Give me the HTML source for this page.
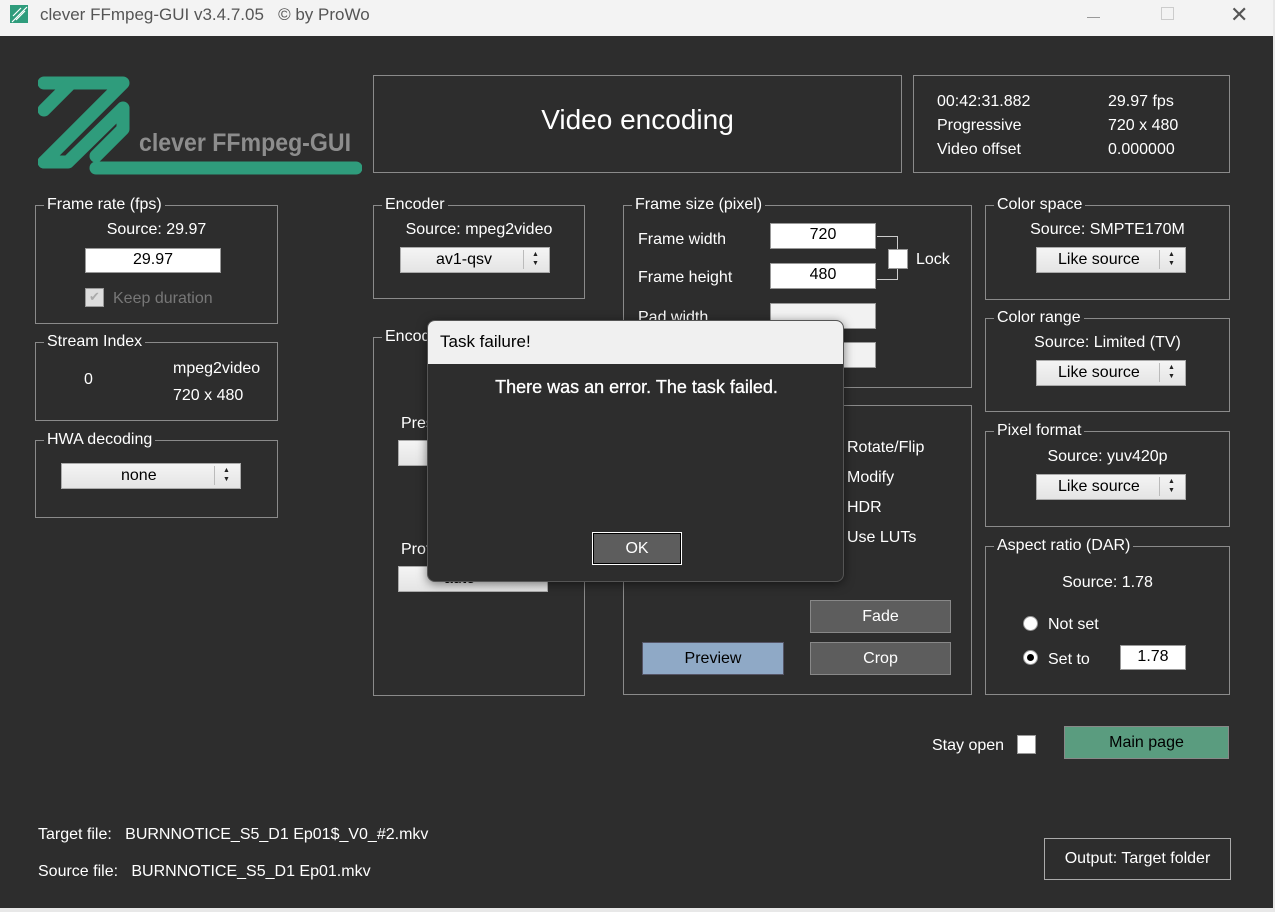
<!DOCTYPE html>
<html><head><meta charset="utf-8"><style>
*{box-sizing:border-box;margin:0;padding:0}
body{width:1275px;height:912px;background:#e8e8e8;font-family:"Liberation Sans",sans-serif;position:relative;overflow:hidden;color:#fff}
.a{position:absolute}
.win{left:0;top:0;width:1273px;height:908px;background:#2d2d2d}
.tb{left:0;top:0;width:1273px;height:36px;background:#f3f3f3;color:#555;font-size:17px}
.g{position:absolute;border:1px solid #8a8a8a}
.g>.l{position:absolute;top:-11px;left:8px;background:#2d2d2d;padding:0 3px;font-size:16px;line-height:20px;color:#fff}
.t{position:absolute;font-size:16px;white-space:nowrap;color:#fff}
.in{position:absolute;background:#fff;border:1px solid #999;color:#000;font-size:16px;text-align:center;line-height:22px}
.sp{position:absolute;background:linear-gradient(#f4f4f4,#e4e4e4);border:1px solid #aaa;color:#000;font-size:16px;line-height:23px}
.sp .ar{position:absolute;right:2px;top:2px;width:24px;height:19px;border-left:1px solid #bbb;font-size:7px;line-height:9px;text-align:center;color:#222}
.btn{position:absolute;background:#5d5d5d;border:1px solid #888;color:#fff;font-size:16px;text-align:center}
</style></head><body>
<div class="a win"></div>
<div class="a tb">
<svg class="a" style="left:10px;top:5px" width="18" height="18"><rect width="18" height="18" fill="#2f9c7c"/><path d="M3 11 L11 3 M6 15 L15 6 M2 17 L17 2" stroke="#fff" stroke-width="1.2"/></svg>
<div class="a" style="left:40px;top:5px">clever FFmpeg-GUI v3.4.7.05&nbsp;&nbsp;&nbsp;© by ProWo</div>
<div class="a" style="left:1087px;top:17px;width:13px;height:1px;background:#999"></div>
<div class="a" style="left:1161px;top:7px;width:13px;height:13px;border:1px solid #ccc"></div>
<div class="a" style="left:1230px;top:2px;font-size:22px;color:#555">✕</div>
</div>
<!-- logo -->
<svg class="a" style="left:38px;top:74px" width="324" height="102" viewBox="0 0 324 102">
<g fill="none" stroke="#2f9c7c" stroke-width="13" stroke-linejoin="round" stroke-linecap="round">
<path d="M6 9 H85 L6 88"/>
<path d="M6 36 L32 10"/>
<path d="M6 88 H30 L85 34 V55 L58 82"/>
<path d="M58 94 H318"/>
</g>
<text x="101" y="77" textLength="212" lengthAdjust="spacingAndGlyphs" font-family="Liberation Sans,sans-serif" font-weight="bold" font-size="25" fill="#8d8d8d">clever FFmpeg-GUI</text>
</svg>
<div class="g" style="left:373px;top:75px;width:529px;height:98px"></div>
<div class="t" style="left:373px;top:104px;width:529px;text-align:center;font-size:28px">Video encoding</div>
<div class="g" style="left:913px;top:75px;width:317px;height:98px"></div>
<div class="t" style="left:937px;top:90px;line-height:24px">00:42:31.882<br>Progressive<br>Video offset</div>
<div class="t" style="left:1108px;top:90px;line-height:24px">29.97 fps<br>720 x 480<br>0.000000</div>

<div class="g" style="left:35px;top:205px;width:243px;height:119px"><div class="l">Frame rate (fps)</div></div>
<div class="t" style="left:35px;top:221px;width:243px;text-align:center">Source: 29.97</div>
<div class="in" style="left:85px;top:248px;width:136px;height:25px">29.97</div>
<div class="a" style="left:85px;top:288px;width:19px;height:19px;background:#ddd;border:1px solid #999;color:#aaa;font-size:13px;text-align:center">✔</div>
<div class="t" style="left:113px;top:290px;color:#777">Keep duration</div>

<div class="g" style="left:35px;top:342px;width:243px;height:79px"><div class="l">Stream Index</div></div>
<div class="t" style="left:84px;top:371px">0</div>
<div class="t" style="left:173px;top:355px;line-height:27px">mpeg2video<br>720 x 480</div>

<div class="g" style="left:35px;top:440px;width:243px;height:78px"><div class="l">HWA decoding</div></div>
<div class="sp" style="left:61px;top:463px;width:180px;height:26px"><span style="position:absolute;left:59px">none</span><div class="ar">▲<br>▼</div></div>

<div class="g" style="left:373px;top:205px;width:212px;height:94px"><div class="l">Encoder</div></div>
<div class="t" style="left:373px;top:221px;width:212px;text-align:center">Source: mpeg2video</div>
<div class="sp" style="left:400px;top:247px;width:150px;height:26px"><span style="position:absolute;left:35px">av1-qsv</span><div class="ar">▲<br>▼</div></div>

<div class="g" style="left:373px;top:337px;width:212px;height:359px"><div class="l">Encoder</div></div>
<div class="t" style="left:401px;top:415px">Preset</div>
<div class="sp" style="left:398px;top:440px;width:150px;height:26px"></div>
<div class="t" style="left:401px;top:541px">Profile</div>
<div class="sp" style="left:398px;top:566px;width:150px;height:26px"><span style="position:absolute;left:45px">auto</span></div>

<div class="g" style="left:623px;top:205px;width:349px;height:183px"><div class="l">Frame size (pixel)</div></div>
<div class="t" style="left:638px;top:231px">Frame width</div>
<div class="t" style="left:638px;top:269px">Frame height</div>
<div class="t" style="left:638px;top:309px">Pad width</div>
<div class="in" style="left:770px;top:223px;width:106px;height:26px">720</div>
<div class="in" style="left:770px;top:263px;width:106px;height:26px">480</div>
<div class="in" style="left:770px;top:303px;width:106px;height:26px;background:#f2f2f2"></div>
<div class="in" style="left:770px;top:342px;width:106px;height:26px;background:#f2f2f2"></div>
<div class="a" style="left:877px;top:236px;width:21px;height:44px;border:1px solid #ccc;border-left:none"></div>
<div class="a" style="left:888px;top:249px;width:20px;height:20px;background:#fff;border:1px solid #999"></div>
<div class="t" style="left:916px;top:251px">Lock</div>

<div class="g" style="left:623px;top:405px;width:349px;height:290px"></div>
<div class="t" style="left:847px;top:433px;line-height:30px">Rotate/Flip<br>Modify<br>HDR<br>Use LUTs</div>
<div class="btn" style="left:810px;top:600px;width:141px;height:33px;line-height:31px">Fade</div>
<div class="btn" style="left:810px;top:642px;width:141px;height:33px;line-height:31px">Crop</div>
<div class="btn" style="left:642px;top:642px;width:142px;height:33px;line-height:31px;background:#8fa9c6;color:#000;border-color:#556">Preview</div>

<div class="g" style="left:985px;top:205px;width:245px;height:95px"><div class="l">Color space</div></div>
<div class="t" style="left:985px;top:221px;width:245px;text-align:center">Source: SMPTE170M</div>
<div class="sp" style="left:1036px;top:247px;width:150px;height:26px"><span style="position:absolute;left:21px">Like source</span><div class="ar">▲<br>▼</div></div>

<div class="g" style="left:985px;top:318px;width:245px;height:94px"><div class="l">Color range</div></div>
<div class="t" style="left:985px;top:334px;width:245px;text-align:center">Source: Limited (TV)</div>
<div class="sp" style="left:1036px;top:360px;width:150px;height:26px"><span style="position:absolute;left:21px">Like source</span><div class="ar">▲<br>▼</div></div>

<div class="g" style="left:985px;top:431px;width:245px;height:96px"><div class="l">Pixel format</div></div>
<div class="t" style="left:985px;top:448px;width:245px;text-align:center">Source: yuv420p</div>
<div class="sp" style="left:1036px;top:474px;width:150px;height:26px"><span style="position:absolute;left:21px">Like source</span><div class="ar">▲<br>▼</div></div>

<div class="g" style="left:985px;top:546px;width:245px;height:149px"><div class="l">Aspect ratio (DAR)</div></div>
<div class="t" style="left:985px;top:574px;width:305px;text-align:center;left:955px">Source: 1.78</div>
<div class="a" style="left:1023px;top:616px;width:15px;height:15px;border-radius:50%;background:#fff;border:1px solid #999"></div>
<div class="t" style="left:1048px;top:616px">Not set</div>
<div class="a" style="left:1023px;top:650px;width:15px;height:15px;border-radius:50%;background:#fff;border:1px solid #999"><div class="a" style="left:3px;top:3px;width:7px;height:7px;border-radius:50%;background:#000"></div></div>
<div class="t" style="left:1048px;top:651px">Set to</div>
<div class="in" style="left:1120px;top:645px;width:66px;height:25px">1.78</div>

<div class="t" style="left:932px;top:737px">Stay open</div>
<div class="a" style="left:1017px;top:735px;width:19px;height:19px;background:#fff;border:1px solid #999"></div>
<div class="btn" style="left:1064px;top:726px;width:165px;height:33px;line-height:31px;background:#5a9c7f;color:#000">Main page</div>

<div class="t" style="left:38px;top:826px">Target file:&nbsp;&nbsp;&nbsp;BURNNOTICE_S5_D1 Ep01$_V0_#2.mkv</div>
<div class="t" style="left:38px;top:863px">Source file:&nbsp;&nbsp;&nbsp;BURNNOTICE_S5_D1 Ep01.mkv</div>
<div class="btn" style="left:1044px;top:838px;width:187px;height:42px;line-height:40px;background:#2d2d2d;border-color:#aaa">Output: Target folder</div>

<!-- dialog -->
<div class="a" style="left:427px;top:320px;width:417px;height:262px;background:#2d2d2d;border:1px solid #555;border-radius:8px;overflow:hidden;box-shadow:0 2px 10px rgba(0,0,0,.5)">
<div class="a" style="left:0;top:0;width:417px;height:43px;background:#f0f0f0;color:#000;font-size:17px;padding:11px 0 0 12px">Task failure!</div>
<div class="t" style="left:0;top:56px;width:417px;text-align:center;font-size:18px;-webkit-text-stroke:0.3px #fff">There was an error. The task failed.</div>
<div class="btn" style="left:164px;top:211px;width:90px;height:33px;line-height:31px;border:1px solid #fff;outline:1px solid #000;outline-offset:-2px">OK</div>
</div>
</body></html>
